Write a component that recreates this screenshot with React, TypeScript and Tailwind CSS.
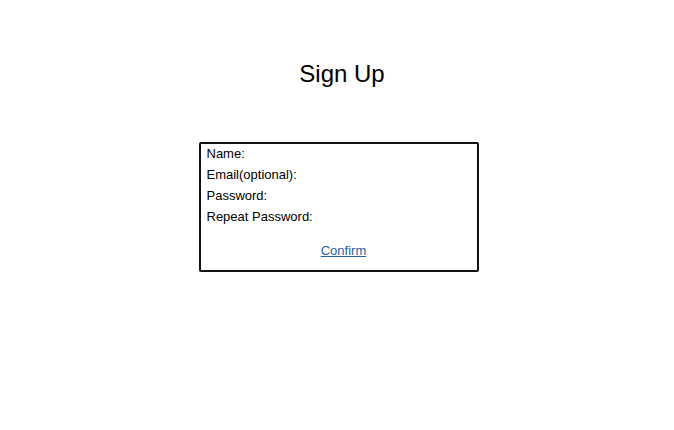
export default function App() {
  const fields = ['Name:', 'Email(optional):', 'Password:', 'Repeat Password:']

  return (
    <div
      className="min-h-screen w-full bg-white text-black flex flex-col items-center"
      style={{ fontFamily: '"Liberation Sans", Arial, sans-serif' }}
    >
      {/* Title */}
      <h1 className="mt-[58px] ml-[10px] text-[24px] leading-[32px] font-normal">Sign Up</h1>

      {/* Form box */}
      <div className="mt-[52px] ml-[3px] w-[280px] h-[130px] border-2 border-[#111] rounded-[2px] px-[6px] flex flex-col">
        <div className="-mt-px flex flex-col text-[13px] leading-[21px]">
          {fields.map((f) => (
            <span key={f}>{f}</span>
          ))}
        </div>
        <div className="mt-[13px] pl-[10px] flex justify-center">
          <a href="#" className="text-[13px] leading-[21px] text-[#2a5fa6] underline">
            Confirm
          </a>
        </div>
      </div>
    </div>
  )
}
